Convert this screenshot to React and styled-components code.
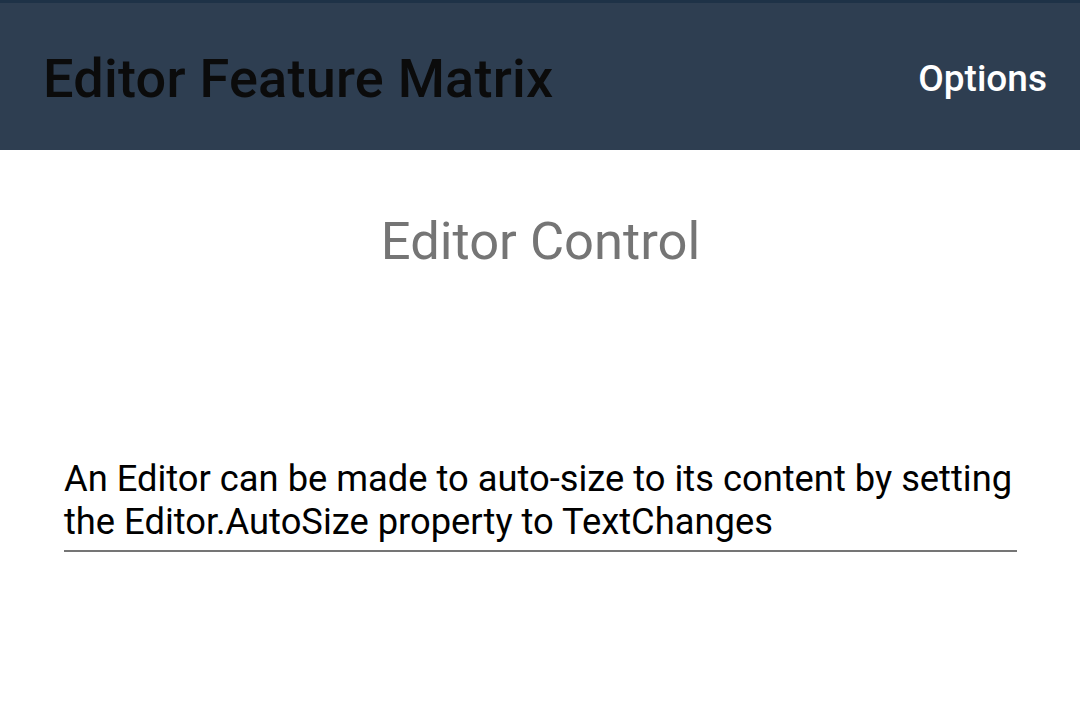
import React from "react";
import styled, { createGlobalStyle } from "styled-components";

const GlobalStyle = createGlobalStyle`
  html, body {
    margin: 0;
    padding: 0;
    background: #fff;
    font-family: Roboto, "Liberation Sans", sans-serif;
  }
`;

const Page = styled.div`
  width: 1080px;
  height: 710px;
  display: flex;
  flex-direction: column;
  overflow: hidden;
`;

const Toolbar = styled.header`
  height: 147px;
  border-top: 3px solid #1e3247;
  background: #2e3e51;
  display: flex;
  align-items: center;
  justify-content: space-between;
  padding: 3px 33px 0 43px;
  box-sizing: border-box;
  height: 150px;
`;

const Title = styled.h1`
  margin: 0;
  font-size: 54px;
  font-weight: 500;
  color: #0b0b0b;
  letter-spacing: 0.25px;
`;

const ToolbarItem = styled.span`
  font-size: 37px;
  font-weight: 500;
  color: #ffffff;
`;

const Content = styled.main`
  flex: 1;
  display: flex;
  flex-direction: column;
  padding: 0 63px 0 64px;
`;

const Heading = styled.h2`
  margin: 60px 0 0;
  text-align: center;
  font-size: 52.5px;
  font-weight: 400;
  line-height: 62px;
  color: #757575;
`;

const Editor = styled.div`
  margin-top: 185px;
  padding-bottom: 7px;
  border-bottom: 2px solid #757575;
  font-size: 36.3px;
  line-height: 43px;
  color: #000;
`;

export default function App() {
  return (
    <Page>
      <GlobalStyle />
      <Toolbar>
        <Title>Editor Feature Matrix</Title>
        <ToolbarItem>Options</ToolbarItem>
      </Toolbar>
      <Content>
        <Heading>Editor Control</Heading>
        <Editor>
          An Editor can be made to auto-size to its content by setting the
          Editor.AutoSize property to TextChanges
        </Editor>
      </Content>
    </Page>
  );
}
